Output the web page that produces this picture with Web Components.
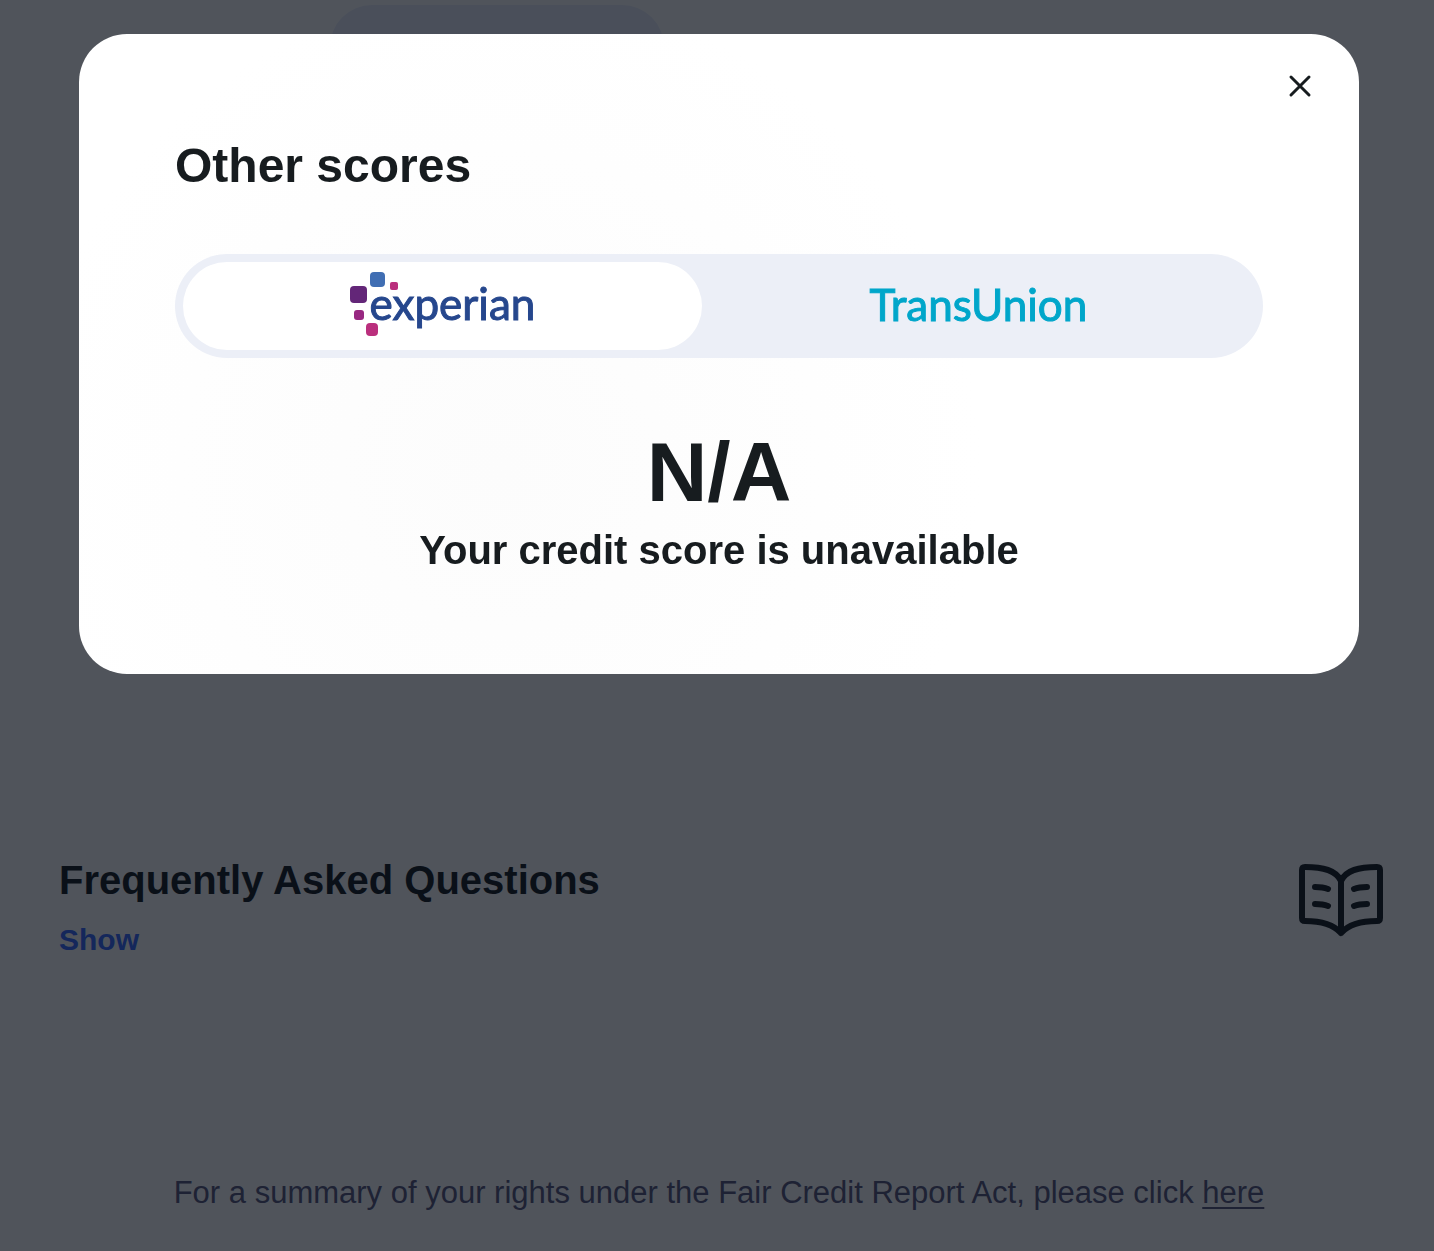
<!DOCTYPE html>
<html lang="en">
<head>
<meta charset="utf-8">
<meta name="viewport" content="width=device-width, initial-scale=1">
<title>Other scores</title>
<style>
  body {
    margin: 0;
    min-height: 100vh;
    background-color: #ffffff;
    color: #171c1f;
    font-family: "Liberation Sans", Arial, sans-serif;
  }
</style>
</head>
<body>
<score-page>
  <score-hero></score-hero>
  <faq-section data-title="Frequently Asked Questions"></faq-section>
  <rights-note>For a summary of your rights under the Fair Credit Report Act, please click <a href="#rights" slot="link">here</a></rights-note>
</score-page>
<score-dialog data-title="Other scores">
  <bureau-tabs></bureau-tabs>
  <score-result data-value="N/A" data-message="Your credit score is unavailable"></score-result>
</score-dialog>

<script>
class BaseElement extends HTMLElement
{
  constructor()
  {
    super();
    this.attachShadow({mode: "open"});
  }

  connectedCallback()
  {
    this.shadowRoot.innerHTML = `<style>${this.styleCSS()}</style>${this.html()}`;
  }
}

class ScorePage extends BaseElement
{
  html()
  {
    return `<main><slot></slot></main>`;
  }

  styleCSS()
  {
    return `
      :host {
        display: block;
      }

      main {
        display: flex;
        flex-direction: column;
      }
    `;
  }
}

class ScoreHero extends BaseElement
{
  html()
  {
    return `<div class="pill"></div>`;
  }

  styleCSS()
  {
    return `
      :host {
        display: flex;
        box-sizing: border-box;
        min-height: 772px;
        padding: 5px 23%;
      }

      .pill {
        width: 334px;
        height: 84px;
        border-radius: 42px;
        background-color: #eaeffb;
      }
    `;
  }
}

class FaqSection extends BaseElement
{
  html()
  {
    return `
      <div class="text">
        <h2>${this.getAttribute("data-title")}</h2>
        <button type="button">Show</button>
      </div>
      <svg width="84" height="76" viewBox="0 0 84 76" fill="none" stroke="currentColor" stroke-width="6" stroke-linecap="round" stroke-linejoin="round" aria-hidden="true">
        <path d="M42 18 C37 7 24 4 6 4 Q3 4 3 7 V55 Q3 58 6 58 C22 58 34 61 42 70 C50 61 62 58 78 58 Q81 58 81 55 V7 Q81 4 78 4 C60 4 47 7 42 18 V70"/>
        <path d="M16 24 Q24 24 29 26 M16 41 Q24 41 29 43 M68 24 Q60 24 55 26 M68 41 Q60 41 55 43"/>
      </svg>
    `;
  }

  styleCSS()
  {
    return `
      :host {
        display: flex;
        justify-content: space-between;
        align-items: flex-start;
        box-sizing: border-box;
        min-height: 273px;
        padding: 84px 51px 84px 59px;
      }

      .text {
        display: flex;
        flex-direction: column;
        align-items: flex-start;
        gap: 16px;
      }

      h2 {
        margin: 0;
        font-size: 40px;
        line-height: 48px;
      }

      button {
        padding: 0;
        border: 0;
        background: none;
        color: #3768ff;
        font: bold 30px/40px "Liberation Sans", Arial, sans-serif;
      }

      svg {
        margin-top: 7px;
      }
    `;
  }
}

class RightsNote extends BaseElement
{
  html()
  {
    return `<p><slot></slot><slot name="link"></slot></p>`;
  }

  styleCSS()
  {
    return `
      :host {
        display: block;
        padding: 128px 24px 38px 28px;
        color: #58587d;
      }

      p {
        margin: 0;
        text-align: center;
        font-size: 31px;
        line-height: 40px;
      }

      ::slotted(a) {
        color: inherit;
        text-underline-offset: 4px;
        text-decoration-thickness: 2px;
      }
    `;
  }
}

class ScoreDialog extends BaseElement
{
  html()
  {
    return `
      <section role="dialog" aria-labelledby="title">
        <button type="button" aria-label="Close">
          <svg width="24" height="24" viewBox="0 0 24 24" fill="none" stroke="currentColor" stroke-width="3" stroke-linecap="round" aria-hidden="true">
            <path d="M3 3 21 21M21 3 3 21"/>
          </svg>
        </button>
        <h1 id="title">${this.getAttribute("data-title")}</h1>
        <slot></slot>
      </section>
    `;
  }

  styleCSS()
  {
    return `
      :host {
        position: fixed;
        inset: 0;
        box-sizing: border-box;
        padding: 34px 75px 34px 79px;
        background-color: rgba(5, 11, 22, 0.7);
      }

      section {
        display: flex;
        flex-direction: column;
        box-sizing: border-box;
        padding: 32px 96px 96px;
        border-radius: 48px;
        background: radial-gradient(circle at 33% 68%, #fcfcfc, #ffffff 480px);
      }

      button {
        display: flex;
        align-self: flex-end;
        margin-right: -57px;
        padding: 8px;
        border: 0;
        background: none;
        color: #171c1f;
      }

      h1 {
        margin: 28px 0 56px;
        font-size: 48px;
        line-height: 64px;
      }
    `;
  }
}

class BureauTabs extends BaseElement
{
  html()
  {
    return `
      <div class="tabs" role="tablist">
        <button type="button" role="tab" aria-selected="true">
          <span class="experian">
            <svg width="52" height="68" viewBox="0 0 52 68" aria-hidden="true">
              <rect x="20" y="0" width="15" height="15" rx="4" fill="#406eb3"/>
              <rect x="40" y="10" width="8" height="8" rx="2" fill="#ba2f7d"/>
              <rect x="0" y="14" width="17" height="17" rx="4" fill="#632678"/>
              <rect x="4" y="38" width="10" height="10" rx="3" fill="#982881"/>
              <rect x="16" y="51" width="12" height="13" rx="4" fill="#ba2f7d"/>
            </svg>
            <span>experian</span>
          </span>
        </button>
        <button type="button" role="tab" aria-selected="false">
          <span class="transunion">TransUnion</span>
        </button>
      </div>
    `;
  }

  styleCSS()
  {
    return `
      :host {
        display: block;
      }

      .tabs {
        display: grid;
        grid-template-columns: 48.4% 51.6%;
        padding: 8px;
        border-radius: 52px;
        background-color: #eceff7;
      }

      button {
        display: flex;
        align-items: center;
        justify-content: center;
        height: 88px;
        padding: 0;
        border: 0;
        border-radius: 44px;
        background: none;
      }

      button[aria-selected="true"] {
        background-color: #ffffff;
      }

      .experian {
        display: flex;
        align-items: center;
        color: #26478d;
        font: 44px/48px Lato, sans-serif;
        -webkit-text-stroke: 1px currentColor;
      }

      .experian span {
        margin-left: -32px;
        padding-bottom: 6px;
      }

      .transunion {
        padding-bottom: 4px;
        color: #00a6ca;
        font: 44px/48px Lato, sans-serif;
        -webkit-text-stroke: 1px currentColor;
      }
    `;
  }
}

class ScoreResult extends BaseElement
{
  html()
  {
    return `
      <strong>${this.getAttribute("data-value")}</strong>
      <p>${this.getAttribute("data-message")}</p>
    `;
  }

  styleCSS()
  {
    return `
      :host {
        display: flex;
        flex-direction: column;
        align-items: center;
        margin-top: 70px;
        font-weight: bold;
      }

      strong {
        font-size: 84px;
        line-height: 88px;
      }

      p {
        margin: 6px 0 0;
        font-size: 40px;
        line-height: 56px;
      }
    `;
  }
}

customElements.define("score-page", ScorePage);
customElements.define("score-hero", ScoreHero);
customElements.define("faq-section", FaqSection);
customElements.define("rights-note", RightsNote);
customElements.define("score-dialog", ScoreDialog);
customElements.define("bureau-tabs", BureauTabs);
customElements.define("score-result", ScoreResult);
</script>
</body>
</html>
